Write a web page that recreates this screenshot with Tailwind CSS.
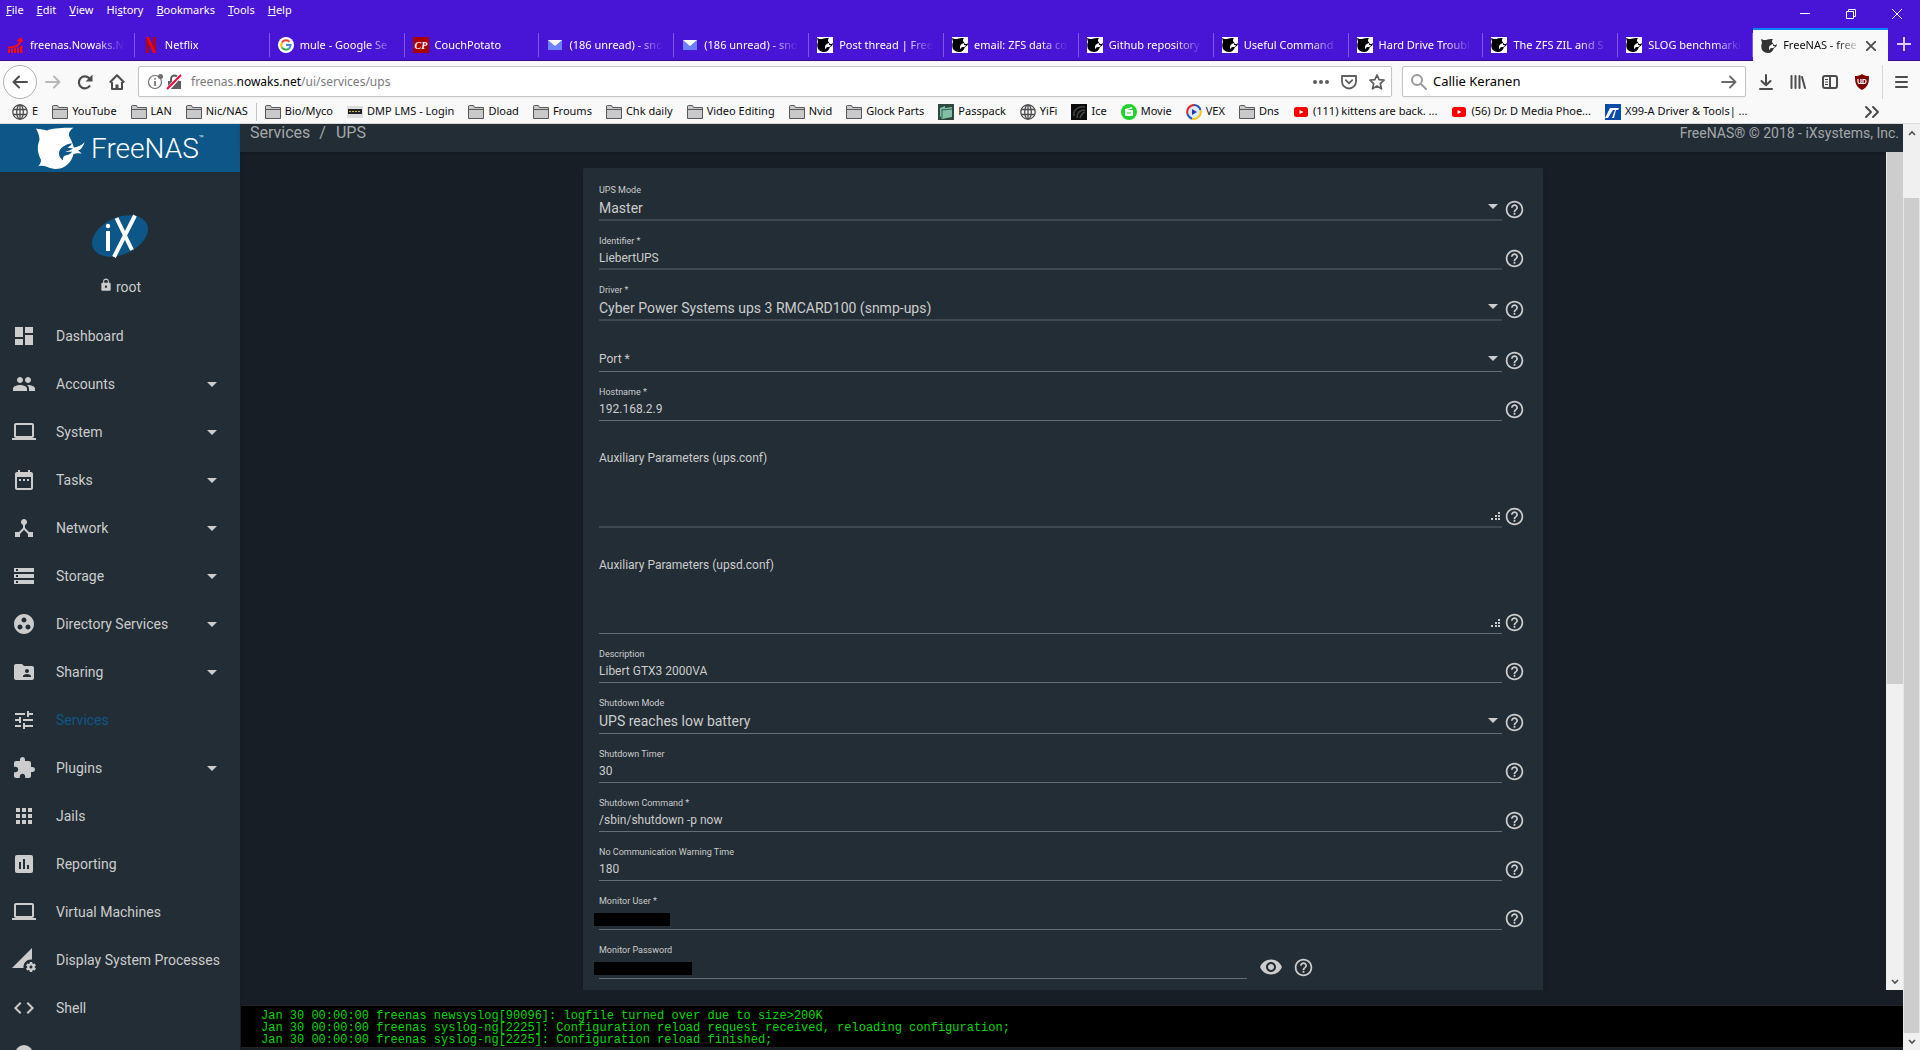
<!DOCTYPE html>
<html lang="en">
<head>
<meta charset="utf-8">
<title>FreeNAS - freenas.nowaks.net</title>
<script src="https://cdn.jsdelivr.net/npm/@tailwindcss/browser@4"></script>
</head>
<body class="h-screen overflow-hidden flex flex-col bg-[#171e25] font-['Noto_Sans',sans-serif] text-[11px]">

<svg class="hidden">
  <symbol id="help" viewBox="0 0 24 24"><path fill="currentColor" d="M11 18h2v-2h-2v2zm1-16C6.48 2 2 6.48 2 12s4.480 10 10 10 10-4.480 10-10S17.520 2 12 2zm0 18c-4.410 0-8-3.590-8-8s3.590-8 8-8 8 3.590 8 8-3.590 8-8 8zm0-14c-2.210 0-4 1.790-4 4h2c0-1.100.9-2 2-2s2 .9 2 2c0 2-3 1.750-3 5h2c0-2.250 3-2.500 3-5 0-2.210-1.790-4-4-4z"/></symbol>
  <symbol id="caret" viewBox="0 0 10 5"><path fill="currentColor" d="M0 0h10L5 5z"/></symbol>
  <symbol id="grip" viewBox="0 0 9 8"><path fill="currentColor" d="M7 0h2v2H7zM4 3h2v2H4zM7 3h2v2H7zM0 6h2v2H0zM4 6h2v2H4zM7 6h2v2H7z"/></symbol>
  <symbol id="eye" viewBox="0 0 24 24"><path fill="currentColor" d="M12 4.500C7 4.500 2.730 7.610 1 12c1.730 4.390 6 7.500 11 7.500s9.270-3.110 11-7.500c-1.730-4.390-6-7.500-11-7.500zM12 17c-2.760 0-5-2.240-5-5s2.240-5 5-5 5 2.240 5 5-2.240 5-5 5zm0-8c-1.660 0-3 1.340-3 3s1.340 3 3 3 3-1.340 3-3-1.340-3-3-3z"/></symbol>
  <symbol id="lock" viewBox="0 0 24 24"><path fill="currentColor" d="M18 8h-1V6c0-2.760-2.240-5-5-5S7 3.240 7 6v2H6c-1.100 0-2 .9-2 2v10c0 1.100.9 2 2 2h12c1.100 0 2-.9 2-2V10c0-1.100-.9-2-2-2zm-6 9c-1.100 0-2-.9-2-2s.9-2 2-2 2 .9 2 2-.9 2-2 2zm3.100-9H8.900V6c0-1.710 1.390-3.100 3.100-3.100s3.100 1.390 3.100 3.100v2z"/></symbol>

  <symbol id="dashboard" viewBox="0 0 24 24"><path fill="currentColor" d="M3 13h8V3H3v10zm0 8h8v-6H3v6zm10 0h8V11h-8v10zm0-18v6h8V3h-8z"/></symbol>
  <symbol id="group" viewBox="0 0 24 24"><path fill="currentColor" d="M16 11c1.660 0 2.990-1.340 2.990-3S17.660 5 16 5s-3 1.340-3 3 1.340 3 3 3zm-8 0c1.660 0 2.990-1.340 2.990-3S9.660 5 8 5 5 6.340 5 8s1.340 3 3 3zm0 2c-2.330 0-7 1.170-7 3.500V19h14v-2.500C15 14.170 10.330 13 8 13zm8 0c-.29 0-.62.02-.97.05 1.160.84 1.970 1.970 1.970 3.450V19h6v-2.500c0-2.330-4.670-3.500-7-3.500z"/></symbol>
  <symbol id="laptop" viewBox="0 0 24 24"><path fill="currentColor" d="M20 18c1.100 0 1.990-.9 1.990-2L22 5c0-1.100-.9-2-2-2H4c-1.100 0-2 .9-2 2v11c0 1.100.9 2 2 2H0v2h24v-2h-4zM4 5h16v11H4V5z"/></symbol>
  <symbol id="date" viewBox="0 0 24 24"><path fill="currentColor" d="M9 11H7v2h2v-2zm4 0h-2v2h2v-2zm4 0h-2v2h2v-2zm2-7h-1V2h-2v2H8V2H6v2H5c-1.110 0-1.990.9-1.990 2L3 20c0 1.100.89 2 2 2h14c1.100 0 2-.9 2-2V6c0-1.100-.9-2-2-2zm0 16H5V9h14v11z"/></symbol>
  <symbol id="hub" viewBox="0 0 24 24"><path fill="currentColor" d="M17 16l-4-4V8.820C14.160 8.400 15 7.300 15 6c0-1.660-1.340-3-3-3S9 4.340 9 6c0 1.300.84 2.400 2 2.820V12l-4 4H3v5h5v-3.050l4-4.200 4 4.200V21h5v-5h-4z"/></symbol>
  <symbol id="storage" viewBox="0 0 24 24"><path fill="currentColor" d="M2 20h20v-4H2v4zm2-3h2v2H4v-2zM2 4v4h20V4H2zm4 3H4V5h2v2zm-4 7h20v-4H2v4zm2-3h2v2H4v-2z"/></symbol>
  <symbol id="work" viewBox="0 0 24 24"><path fill="currentColor" d="M12 2C6.480 2 2 6.480 2 12s4.480 10 10 10 10-4.480 10-10S17.520 2 12 2zM8 17.500c-1.380 0-2.500-1.120-2.500-2.500s1.120-2.500 2.500-2.500 2.500 1.120 2.500 2.500-1.120 2.500-2.500 2.500zM9.500 8c0-1.380 1.120-2.500 2.500-2.500s2.500 1.120 2.500 2.500-1.120 2.500-2.500 2.500S9.500 9.380 9.500 8zm6.500 9.500c-1.380 0-2.500-1.120-2.500-2.500s1.120-2.500 2.500-2.500 2.500 1.120 2.500 2.500-1.120 2.500-2.500 2.500z"/></symbol>
  <symbol id="shared" viewBox="0 0 24 24"><path fill="currentColor" d="M20 6h-8l-2-2H4c-1.100 0-1.990.9-1.990 2L2 18c0 1.100.9 2 2 2h16c1.100 0 2-.9 2-2V8c0-1.100-.9-2-2-2zm-5 3c1.100 0 2 .9 2 2s-.9 2-2 2-2-.9-2-2 .9-2 2-2zm4 8h-8v-1c0-1.330 2.670-2 4-2s4 .67 4 2v1z"/></symbol>
  <symbol id="tune" viewBox="0 0 24 24"><path fill="currentColor" d="M3 17v2h6v-2H3zM3 5v2h10V5H3zm10 16v-2h8v-2h-8v-2h-2v6h2zM7 9v2H3v2h4v2h2V9H7zm14 4v-2H11v2h10zm-6-4h2V7h4V5h-4V3h-2v6z"/></symbol>
  <symbol id="plugin" viewBox="0 0 24 24"><path fill="currentColor" d="M20.500 11H19V7c0-1.100-.9-2-2-2h-4V3.500C13 2.120 11.880 1 10.500 1S8 2.120 8 3.500V5H4c-1.100 0-1.990.9-1.990 2v3.800H3.500c1.490 0 2.700 1.210 2.700 2.700s-1.210 2.700-2.700 2.700H2V20c0 1.100.9 2 2 2h3.800v-1.500c0-1.490 1.210-2.700 2.700-2.700 1.490 0 2.700 1.210 2.700 2.700V22H17c1.100 0 2-.9 2-2v-4h1.500c1.380 0 2.500-1.120 2.500-2.500S21.880 11 20.500 11z"/></symbol>
  <symbol id="apps" viewBox="0 0 24 24"><path fill="currentColor" d="M4 8h4V4H4v4zm6 12h4v-4h-4v4zm-6 0h4v-4H4v4zm0-6h4v-4H4v4zm6 0h4v-4h-4v4zm6-10v4h4V4h-4zm-6 4h4V4h-4v4zm6 6h4v-4h-4v4zm0 6h4v-4h-4v4z"/></symbol>
  <symbol id="chart" viewBox="0 0 24 24"><path fill="currentColor" d="M19 3H5c-1.100 0-2 .9-2 2v14c0 1.100.9 2 2 2h14c1.100 0 2-.9 2-2V5c0-1.100-.9-2-2-2zM9 17H7v-7h2v7zm4 0h-2V7h2v10zm4 0h-2v-4h2v4z"/></symbol>
  <symbol id="process" viewBox="0 0 24 24"><path fill="currentColor" d="M18.990 11.500c.34 0 .67.03 1 .07L20 0 0 20h11.560c-.04-.33-.07-.66-.07-1 0-4.140 3.360-7.500 7.500-7.500zm3.710 7.990c.02-.16.04-.32.04-.49 0-.17-.01-.33-.04-.49l1.060-.83c.09-.08.12-.21.06-.32l-1-1.730c-.06-.11-.19-.15-.31-.11l-1.240.5c-.26-.2-.54-.37-.85-.49l-.19-1.320c-.01-.12-.12-.21-.24-.21h-2c-.12 0-.23.09-.25.21l-.19 1.320c-.3.13-.59.29-.85.49l-1.240-.5c-.11-.04-.24 0-.31.11l-1 1.730c-.06.11-.04.24.06.32l1.060.83c-.02.16-.03.32-.03.49 0 .17.01.33.03.49l-1.060.83c-.09.08-.12.21-.06.32l1 1.730c.06.11.19.15.31.11l1.240-.5c.26.2.54.37.85.49l.19 1.320c.02.12.12.21.25.21h2c.12 0 .23-.09.25-.21l.19-1.320c.3-.13.590-.29.84-.49l1.250.5c.11.04.24 0 .31-.11l1-1.730c.06-.11.03-.24-.06-.32l-1.070-.83zm-3.710 1.010c-.83 0-1.500-.67-1.500-1.500s.67-1.500 1.500-1.500 1.500.67 1.500 1.500-.67 1.500-1.500 1.500z"/></symbol>
  <symbol id="code" viewBox="0 0 24 24"><path fill="currentColor" d="M9.400 16.600L4.800 12l4.600-4.600L8 6l-6 6 6 6 1.400-1.400zm5.200 0l4.600-4.600-4.600-4.600L16 6l6 6-6 6-1.400-1.400z"/></symbol>
  <symbol id="guide" viewBox="0 0 24 24"><circle cx="12" cy="10" r="9" fill="currentColor"/></symbol>

  <symbol id="shark" viewBox="105 295 150 125"><path fill="currentColor" d="M108 299c9 2 20 3 33 6 14-6 43-9 79-8-9 6-14 14-13 23 2 8 8 13 10 23 3 6 4 9 4 13 12-1 22-6 33-16-4 12-10 21-20 26 5 2 8 4 11 9-8-2-17-2-25 1-4 20-19 38-40 43-14 3-27 1-39-5-10-4-18-4-26-2 5-5 8-11 8-19-10-19-13-38-5-58 2-12-5-26-10-36z"/><path fill="#0d5788" d="M215 343c-18 3-33 12-37 24-3 12 2 21 11 27-1-9 2-14 10-15 7-1 14-5 18-11-8 1-15 1-21-1 9-1 17-3 23-9-6 1-12 0-17-3 7-2 12-6 13-12z"/></symbol>
  <symbol id="fav-shark" viewBox="0 0 16 16"><path fill="#fff" d="M0 0h16v16H0z"/><path fill="#000" d="M0 1c2 1 3 1 5 1 2-1 4-1 7-1-1 1-1 2-1 3l2 3c1 0 2 0 3-1 0 2-1 3-3 4-1 3-3 5-6 5-2 0-4-1-5-2l-1-1c-1-3-1-5 0-7z"/><path fill="#fff" d="M12 6c-3 1-4 2-4 4s0 1 1 2c0-2 1-2 3-2 1 0 1-1 2-2h-2z"/></symbol>
  <symbol id="fav-tab" viewBox="0 0 16 16"><path fill="#333" d="M0 1c2 1 3 1 5 1 2-1 4-1 7-1-1 1-1 2-1 3l2 3c1 0 2 0 3-1 0 2-1 3-3 4-1 3-3 5-6 5-2 0-4-1-5-2l-1-1c-1-3-1-5 0-7z"/><path fill="#f9f9fa" d="M12 6c-3 1-4 2-4 4s0 1 1 2c0-2 1-2 3-2 1 0 1-1 2-2h-2z"/></symbol>
  <symbol id="fav-nas" viewBox="0 0 16 16"><path fill="#ff0a0a" d="M0 12h2v4H0zM3 11.500h2V16H3zM6 11h2v5H6zM9 10.500h2V16H9zM12 9h2.500v7H12z"/><path fill="none" stroke="#ff0a0a" stroke-width="2" d="M0 10.500c7 0 12-2 12.500-7"/><path fill="#ff0a0a" d="M8.500 4L13 0l2.500 5z"/></symbol>
  <symbol id="fav-netflix" viewBox="0 0 16 16"><path fill="#b1060f" d="M3 0h3v16H3zM10 0h3v16h-3z"/><path fill="#e50914" d="M3 0h3l7 16h-3z"/></symbol>
  <symbol id="fav-google" viewBox="0 0 16 16"><circle cx="8" cy="8" r="8" fill="#fff"/><g fill="none" stroke-width="2"><path stroke="#ea4335" d="M4 5.500A4.600 4.600 0 0 1 11.300 4.700"/><path stroke="#fbbc05" d="M4 5.500a4.600 4.600 0 0 0 0 5"/><path stroke="#34a853" d="M4 10.500a4.600 4.600 0 0 0 7 .9"/><path stroke="#4285f4" d="M8 8h4.600a4.600 4.600 0 0 1-1.600 3.400"/></g></symbol>
  <symbol id="fav-couch" viewBox="0 0 16 16"><path fill="#a80000" d="M0 0h16v16H0z"/><text x="8" y="12" text-anchor="middle" font-size="10" font-weight="bold" font-style="italic" font-family="Liberation Serif, serif" fill="#fff">CP</text></symbol>
  <symbol id="fav-mail" viewBox="0 0 16 16"><path fill="#6d80ff" d="M1 3h14v10H1z"/><path fill="#fff" d="M1 3h14L8 9z"/></symbol>

  <symbol id="bm-folder" viewBox="0 0 16 16"><path fill="#c9c9cb" stroke="#58585a" d="M.5 14.500v-12.500l1-.5h4l1 2h9v11z"/><path stroke="#58585a" d="M1 5.500h14"/></symbol>
  <symbol id="bm-globe" viewBox="0 0 16 16"><g fill="none" stroke="#4c4c4e" stroke-width="1.300"><circle cx="8" cy="8" r="7.200"/><ellipse cx="8" cy="8" rx="3.300" ry="7.200"/><path d="M1.500 5.500h13M1.500 10.500h13M8 1v14"/></g></symbol>
  <symbol id="bm-dmp" viewBox="0 0 16 16"><path fill="#ddd" d="M0 2h16v12H0z"/><path fill="#222" d="M1 5h14v5H1z"/><path stroke="#c8b84a" stroke-dasharray="2 1" d="M2 7.500h12"/></symbol>
  <symbol id="bm-pass" viewBox="0 0 16 16"><path fill="#2f4740" d="M0 0h16v16H0z"/><path fill="#7fc0a4" d="M2 4l5-2v2l7-1v10l-10 2-2-3z"/><path stroke="#356050" d="M4 5v9M4 6l10-1"/></symbol>
  <symbol id="bm-ice" viewBox="0 0 16 16"><path fill="#0b0b0b" d="M0 0h16v16H0z"/><path fill="none" stroke="#444" stroke-width="1.500" d="M3 12C2 5 8 2 14 3M6 14c0-5 3-8 8-8M9 14c1-3 2-5 5-6"/></symbol>
  <symbol id="bm-movie" viewBox="0 0 16 16"><circle cx="8" cy="8" r="8" fill="#1ed22c"/><path fill="#fff" d="M4 5l7-2 .5 1.500L6 6h6v6H4z"/><path stroke="#1ed22c" d="M6 9h4"/></symbol>
  <symbol id="bm-vex" viewBox="0 0 16 16"><circle cx="8" cy="8" r="6" fill="#dfe9fb"/><g fill="none" stroke-width="2"><path stroke="#d22" d="M1.500 10A7 7 0 0 1 8 1"/><path stroke="#2450c0" d="M8 1a7 7 0 0 1 6.500 5M1.500 10A7 7 0 0 0 6 14.700"/><path stroke="#eac81e" d="M14.500 6A7 7 0 0 1 6 14.700"/></g><path fill="#1b3fa8" d="M6 5l5 3-5 3z"/></symbol>
  <symbol id="bm-yt" viewBox="0 0 16 16"><rect x="1" y="3" width="14" height="10" rx="2.500" fill="#f00"/><path fill="#fff" d="M6.500 6l4 2-4 2z"/></symbol>
  <symbol id="bm-asus" viewBox="0 0 16 16"><path fill="#0a4aa8" d="M0 0h16v16H0z"/><path fill="#fff" d="M5 4h9l-1 2h-2L9 14H7l3-8H8L3 14H0z"/></symbol>
</svg>

<!-- Browser chrome -->
<header class="shrink-0">
  <div class="bg-[#4814d6] text-white">
    <div class="flex justify-between h-7">
      <nav class="flex gap-[13px] px-1.5 h-5 items-center" aria-label="Menu bar">
        <a href="#"><u>F</u>ile</a><a href="#"><u>E</u>dit</a><a href="#"><u>V</u>iew</a><a href="#">Hi<u>s</u>tory</a><a href="#"><u>B</u>ookmarks</a><a href="#"><u>T</u>ools</a><a href="#"><u>H</u>elp</a>
      </nav>
      <div class="flex">
        <button class="w-[46px] h-7 grid place-items-center" aria-label="Minimize"><svg class="size-[10px]" viewBox="0 0 10 10"><path stroke="#fff" d="M0 4.500h10"/></svg></button>
        <button class="w-[46px] h-7 grid place-items-center" aria-label="Restore"><svg class="size-[10px]" viewBox="0 0 10 10" fill="none" stroke="#fff"><path d="M.5 2.500h7v7h-7zM2.500 2V.5h7v7H8"/></svg></button>
        <button class="w-[46px] h-7 grid place-items-center" aria-label="Close"><svg class="size-[10px]" viewBox="0 0 10 10"><path stroke="#fff" d="M0 0l10 10M10 0L0 10"/></svg></button>
      </div>
    </div>
    <div class="flex h-[33px]">
      <div id="tabs" class="grid grid-cols-14 flex-1 min-w-0"></div>
      <button class="w-8 grid place-items-center border-b border-[#2f0d8f]" aria-label="New tab"><svg class="size-[14px]" viewBox="0 0 14 14"><path stroke="#d8ccff" stroke-width="2" d="M7 0v14M0 7h14"/></svg></button>
    </div>
  </div>

  <div class="flex items-center h-[39px] bg-[#f9f9fa] pt-0.5 pl-[3px] pr-[5px] text-[#4c4c4f]">
    <button class="size-[34px] rounded-full border border-[#b1b1b3] bg-white grid place-items-center" aria-label="Back"><svg class="size-4" viewBox="0 0 16 16" fill="none" stroke="currentColor" stroke-width="2" stroke-linecap="round" stroke-linejoin="round"><path d="M15 8H1.500M7 2.500L1.500 8 7 13.500"/></svg></button>
    <button class="w-8 grid place-items-center text-[#b8b8ba]" aria-label="Forward"><svg class="size-4" viewBox="0 0 16 16" fill="none" stroke="currentColor" stroke-width="2" stroke-linecap="round" stroke-linejoin="round"><path d="M1 8h13.500M9 2.500L14.500 8 9 13.500"/></svg></button>
    <button class="w-8 grid place-items-center" aria-label="Reload"><svg class="size-4" viewBox="0 0 16 16"><path fill="none" stroke="currentColor" stroke-width="2.200" d="M13 11.500A6 6 0 1 1 12.500 4.500"/><path fill="currentColor" d="M15.500.5v7h-7z"/></svg></button>
    <button class="w-8 grid place-items-center" aria-label="Home"><svg class="size-4" viewBox="0 0 16 16" fill="none" stroke="currentColor" stroke-width="2" stroke-linejoin="round"><path d="M.8 8.500L8 1.200l7.200 7.300M3 8v7h10V8"/><path d="M8 15v-4.500" stroke-width="3"/></svg></button>
    <div class="flex items-center flex-1 h-[31px] ml-[5px] border border-[#c4c4c6] rounded-xs bg-white pl-2 pr-1.5 shadow-xs">
      <svg class="w-9 h-4 shrink-0" viewBox="0 0 36 16"><circle cx="8" cy="8" r="6.500" fill="none" stroke="#6e6e70" stroke-width="1.200"/><path stroke="#6e6e70" stroke-width="1.600" d="M8 7v5M8 4v1.600"/><circle cx="13.500" cy="2.500" r="2.500" fill="#6e6e70"/><path fill="#5e5e60" d="M21 7h13v8H21z"/><path fill="none" stroke="#5e5e60" stroke-width="2" d="M24 7V5a3.500 3.500 0 0 1 7 0v2"/><path stroke="#fff" stroke-width="4" d="M20 16L34 1"/><path stroke="#ff0039" stroke-width="2" d="M20 15L34 1"/></svg>
      <p class="flex-1 pl-2 text-xs text-[#7a7a7c]">freenas.<span class="text-black">nowaks.net</span>/ui/services/ups</p>
      <div class="flex items-center gap-3 text-[#5e5e60]">
        <svg class="size-4" viewBox="0 0 16 16" fill="currentColor"><circle cx="2" cy="8" r="2"/><circle cx="8" cy="8" r="2"/><circle cx="14" cy="8" r="2"/></svg>
        <svg class="size-4" viewBox="0 0 16 16" fill="none" stroke="currentColor" stroke-width="1.800" stroke-linecap="round" stroke-linejoin="round"><path d="M1 2h14v5.500a7 7 0 0 1-14 0zM4.800 6.200L8 9.300l3.200-3.100"/></svg>
        <svg class="size-4" viewBox="0 0 16 16" fill="none" stroke="currentColor" stroke-width="1.700" stroke-linejoin="round"><path d="M8 1l2.100 4.700 5 .5-3.800 3.400 1.200 5.200L8 12.100l-4.500 2.700 1.200-5.200L.9 6.200l5-.5z"/></svg>
      </div>
    </div>
    <div class="flex items-center w-[344px] h-[31px] ml-2.5 border border-[#c4c4c6] rounded-xs bg-white px-2 shadow-xs">
      <svg class="size-4" viewBox="0 0 16 16" fill="none" stroke="#9a9a9c" stroke-width="2" stroke-linecap="round"><circle cx="6" cy="6" r="5"/><path d="M10 10l5 5"/></svg>
      <input class="flex-1 min-w-0 pl-1.5 text-[13px] text-black outline-none" value="Callie Keranen" aria-label="Search">
      <svg class="size-4" viewBox="0 0 16 16" fill="none" stroke="#6a6a6c" stroke-width="1.800" stroke-linecap="round" stroke-linejoin="round"><path d="M1 8h13.500M9 2.500L14.500 8 9 13.500"/></svg>
    </div>
    <button class="w-8 ml-1 grid place-items-center" aria-label="Downloads"><svg class="size-4" viewBox="0 0 16 16" fill="none" stroke="currentColor" stroke-width="2" stroke-linecap="round" stroke-linejoin="round"><path d="M8 1v10M3.500 7L8 11.300 12.500 7M2 15h12"/></svg></button>
    <button class="w-8 grid place-items-center" aria-label="Library"><svg class="size-4" viewBox="0 0 16 16" fill="none" stroke="currentColor" stroke-width="2" stroke-linecap="round"><path d="M1.500 2v12M5.500 2v12M9.500 2v12M12 3l3 11"/></svg></button>
    <button class="w-8 grid place-items-center" aria-label="Sidebars"><svg class="size-4" viewBox="0 0 16 16" fill="none" stroke="currentColor" stroke-width="2"><rect x="1" y="2" width="14" height="12" rx="2"/><path d="M8 2v12"/><path stroke-width="1" d="M3 5.500h3M3 8h3M3 10.500h3"/></svg></button>
    <button class="w-8 grid place-items-center" aria-label="uBlock"><svg class="size-4" viewBox="0 0 16 16"><path fill="#800000" d="M8 0c2 1.500 4 2 7 2 0 7-1 11-7 14C2 13 1 9 1 2c3 0 5-.5 7-2z"/><path fill="none" stroke="#fff" stroke-width="1.200" d="M4 5v3a1.500 1.500 0 0 0 3 0V5M7 9.500h3.500a1.500 2 0 0 0 0-4H9v4"/></svg></button>
    <div class="h-[34px] w-px bg-[#d7d7db] mx-1"></div>
    <button class="w-7 grid place-items-center" aria-label="Open menu"><svg class="size-4" viewBox="0 0 16 16"><path stroke="currentColor" stroke-width="2" stroke-linecap="round" d="M3 3h11M3 8h11M3 13h11"/></svg></button>
  </div>

  <div class="flex items-center h-6 bg-[#f9f9fa] pl-3 pr-10 border-b border-[#ddd] text-[#0c0c0d]">
    <nav id="bookmarks" class="flex items-center flex-1 gap-3.5 whitespace-nowrap" aria-label="Bookmarks"></nav>
    <svg class="size-4" viewBox="0 0 16 16" fill="none" stroke="#4c4c4f" stroke-width="2" stroke-linecap="round" stroke-linejoin="round"><path d="M2 3l5 5-5 5M9 3l5 5-5 5"/></svg>
  </div>
</header>

<!-- Page viewport -->
<div class="flex flex-1 min-h-0 font-['Roboto',sans-serif] text-[#cccccc]">
  <aside class="w-60 shrink-0 overflow-hidden bg-[#232d35] shadow-md">
    <div class="h-12 bg-[#0d5788] text-white flex items-center pl-[35px] gap-1.5">
      <svg class="w-[50px] h-[42px]"><use href="#shark"/></svg>
      <p class="text-[28px] leading-none font-light flex pt-0.5">FreeNAS<span class="text-[8px]">™</span></p>
    </div>
    <div class="h-[140px] pt-[42px] flex flex-col items-center gap-[19px]">
      <svg class="w-14 h-[44px]" viewBox="0 0 56 44"><ellipse cx="28" cy="22" rx="29.500" ry="18.500" transform="rotate(-24 28 22)" fill="#0d5788"/><path stroke="#fff" stroke-width="4" d="M24.500 4L40 36M43 1.500L22 43"/><path stroke="#fff" stroke-width="4" d="M16 17v20"/><circle cx="16" cy="12" r="2.200" fill="#fff"/></svg>
      <p class="flex items-start gap-[3px] text-sm leading-5"><svg class="size-[14px] mt-px"><use href="#lock"/></svg>root</p>
    </div>
    <nav id="menu" aria-label="Main"></nav>
  </aside>

  <div class="flex-1 min-w-0 flex flex-col">
    <div class="h-7 shrink-0 bg-[#232d35] px-1 pt-px shadow-sm flex justify-between leading-4 text-[#a3a7aa]">
      <p class="flex gap-[9px] pl-1.5 text-base leading-4"><a href="#">Services</a><span>/</span><span class="pl-px">UPS</span></p>
      <p class="text-sm leading-4">FreeNAS® © 2018 - iXsystems, Inc.</p>
    </div>
    <div class="flex flex-1 min-h-0">
      <main class="flex-1 min-w-0 overflow-hidden pt-4">
        <form id="form" class="w-full max-w-[960px] h-full mx-auto rounded-t-xs bg-[#232d35] shadow-md pl-4 pr-[18px] pt-0.5 overflow-hidden"></form>
      </main>
      <div class="w-[17px] shrink-0 bg-[#f0f0f0] flex flex-col justify-between items-center" aria-hidden="true">
        <div class="w-full h-[532px] border-l border-[#e6e6e6] bg-[#cdcdcd]"></div>
        <svg class="w-2 h-4" viewBox="0 0 8 16"><path fill="none" stroke="#505050" stroke-width="1.600" d="M1 6l3 3 3-3"/></svg>
      </div>
    </div>
    <pre class="shrink-0 mt-[15px] ml-px h-[43px] mb-0.5 pl-5 pt-1 border-y border-[#222] bg-black text-[#00d800] text-xs leading-3 font-['Liberation_Mono',monospace]">Jan 30 00:00:00 freenas newsyslog[90096]: logfile turned over due to size&gt;200K
Jan 30 00:00:00 freenas syslog-ng[2225]: Configuration reload request received, reloading configuration;
Jan 30 00:00:00 freenas syslog-ng[2225]: Configuration reload finished;</pre>
  </div>

  <div class="w-[17px] shrink-0 bg-[#f0f0f0] flex flex-col items-center" aria-hidden="true">
    <svg class="w-2 h-[17px]" viewBox="0 0 8 17"><path fill="none" stroke="#505050" stroke-width="1.600" d="M1 11l3-3 3 3"/></svg>
    <div class="w-full flex-1 mt-[57px] bg-[#cdcdcd] border-x border-[#e6e6e6]"></div>
    <svg class="w-2 h-[17px]" viewBox="0 0 8 17"><path fill="none" stroke="#505050" stroke-width="1.600" d="M1 7l3 3 3-3"/></svg>
  </div>
</div>

<script>
  const icon = (id, cls) => `<svg class="${cls}"><use href="#${id}"/></svg>`;

  const tabs = [
    ['fav-nas', 'freenas.Nowaks.N'], ['fav-netflix', 'Netflix'], ['fav-google', 'mule - Google Se'],
    ['fav-couch', 'CouchPotato'], ['fav-mail', '(186 unread) - sno'], ['fav-mail', '(186 unread) - sno'],
    ['fav-shark', 'Post thread | Free'], ['fav-shark', 'email: ZFS data co'], ['fav-shark', 'Github repository'],
    ['fav-shark', 'Useful Command'], ['fav-shark', 'Hard Drive Troubl'], ['fav-shark', 'The ZFS ZIL and S'],
    ['fav-shark', 'SLOG benchmarki'], ['fav-tab', 'FreeNAS - free', true]
  ];
  document.getElementById('tabs').innerHTML = tabs.map(([id, title, active]) => active
    ? `<a href="#" class="flex min-w-0 items-center gap-1.5 pl-2 pr-3 border-t-2 border-[#0a84ff] bg-[#f9f9fa] text-[#0c0c0d]">${icon(id, 'size-4 shrink-0')}<span class="flex-1 overflow-hidden whitespace-nowrap [mask-image:linear-gradient(to_right,black_70%,transparent)]">${title}</span><svg class="size-[10px] shrink-0" viewBox="0 0 10 10"><path stroke="#4c4c4f" stroke-width="1.800" d="M0 0l10 10M10 0L0 10"/></svg></a>`
    : `<a href="#" class="flex min-w-0 items-center pt-0.5 border-b border-[#2f0d8f]"><span class="flex flex-1 min-w-0 items-center gap-1.5 h-6 pl-2 pr-2.5 border-r border-[#7c58e4]">${icon(id, 'size-4 shrink-0')}<span class="flex-1 overflow-hidden whitespace-nowrap [mask-image:linear-gradient(to_right,black_70%,transparent)]">${title}</span></span></a>`
  ).join('');

  const bookmarks = [
    ['globe', 'E'], ['folder', 'YouTube'], ['folder', 'LAN'], ['folder', 'Nic/NAS', true], ['folder', 'Bio/Myco'],
    ['dmp', 'DMP LMS - Login'], ['folder', 'Dload'], ['folder', 'Froums'], ['folder', 'Chk daily'],
    ['folder', 'Video Editing'], ['folder', 'Nvid'], ['folder', 'Glock Parts'], ['pass', 'Passpack'],
    ['globe', 'YiFi'], ['ice', 'Ice'], ['movie', 'Movie'], ['vex', 'VEX'], ['folder', 'Dns'],
    ['yt', '(111) kittens are back. ...'], ['yt', '(56) Dr. D Media Phoe...'], ['asus', 'X99-A Driver & Tools| ...']
  ];
  document.getElementById('bookmarks').innerHTML = bookmarks.map(([id, text, sep]) =>
    `<a href="#" class="flex items-center gap-1">${icon('bm-' + id, 'size-4 shrink-0')}${text}</a>` +
    (sep ? '<span class="w-px h-[18px] bg-[#c4c4c6] -mx-1.5"></span>' : '')
  ).join('');

  const menu = [
    ['dashboard', 'Dashboard'], ['group', 'Accounts', true], ['laptop', 'System', true], ['date', 'Tasks', true],
    ['hub', 'Network', true], ['storage', 'Storage', true], ['work', 'Directory Services', true],
    ['shared', 'Sharing', true], ['tune', 'Services'], ['plugin', 'Plugins', true], ['apps', 'Jails'],
    ['chart', 'Reporting'], ['laptop', 'Virtual Machines'], ['process', 'Display System Processes'],
    ['code', 'Shell'], ['guide', '']
  ];
  document.getElementById('menu').innerHTML = menu.map(([id, text, sub]) =>
    `<a href="#" class="flex items-center h-12 pl-3 pr-[23px] gap-5 text-sm">${icon(id, 'size-6 shrink-0')}<span class="${text === 'Services' ? 'flex-1 whitespace-nowrap text-[#0d5788]' : 'flex-1 whitespace-nowrap'}">${text}</span>${sub ? icon('caret', 'w-[10px] h-[5px]') : ''}</a>`
  ).join('');

  const help = '<button type="button" class="h-full flex items-end pl-0.5 pb-px" aria-label="Help"><svg class="size-[21px]"><use href="#help"/></svg></button>';
  const thick = 'border-b-2 border-[#3f4850]';
  const thin = 'border-b border-[#666e74]';
  const fields = [
    ['select', 'UPS Mode', 'Master', thick],
    ['input', 'Identifier *', 'LiebertUPS', thick],
    ['select', 'Driver *', 'Cyber Power Systems ups 3 RMCARD100 (snmp-ups)', thick],
    ['empty', 'Port *', '', thin],
    ['input', 'Hostname *', '192.168.2.9', thin],
    ['area', 'Auxiliary Parameters (ups.conf)', 'h-[107px]', thick],
    ['area', 'Auxiliary Parameters (upsd.conf)', 'h-[106px]', thin],
    ['input', 'Description', 'Libert GTX3 2000VA', thin],
    ['select', 'Shutdown Mode', 'UPS reaches low battery', thin],
    ['input', 'Shutdown Timer', '30', thin],
    ['input', 'Shutdown Command *', '/sbin/shutdown -p now', thin],
    ['input', 'No Communication Warning Time', '180', thin],
    ['hidden', 'Monitor User *', 'w-[76px] h-[13px]', thin],
    ['password', 'Monitor Password', 'w-[98px] h-[13px]', thin]
  ];
  const small = (i, label) => `<label for="f${i}" class="h-3 text-[9px] leading-3">${label}</label>`;
  const caret = icon('caret', 'absolute right-1 bottom-2.5 w-[10px] h-[5px] pointer-events-none');
  document.getElementById('form').innerHTML = fields.map(([kind, label, value, line], i) => {
    const selectHeight = line === thick ? 'h-[23px]' : 'h-6';
    const inputHeight = line === thick ? 'h-[21px]' : 'h-[22px]';
    if (kind === 'select') return `<div class="flex h-[51px]"><div class="relative flex-1 flex flex-col justify-end ${line}">${small(i, label)}<select id="f${i}" class="appearance-none ${selectHeight} text-sm outline-none"><option>${value}</option></select>${caret}</div>${help}</div>`;
    if (kind === 'empty') return `<div class="flex h-[51px]"><div class="relative flex-1 flex flex-col justify-end ${line}"><select aria-label="Port" class="appearance-none h-6 text-xs outline-none"><option>${label}</option></select>${caret}</div>${help}</div>`;
    if (kind === 'area') return `<div class="flex ${value}"><div class="relative flex-1 flex flex-col pt-[30px] ${line}"><label for="f${i}" class="text-xs leading-[14px]">${label}</label><textarea id="f${i}" class="flex-1 resize-none text-xs outline-none"></textarea>${icon('grip', 'absolute right-0.5 bottom-1.5 w-[9px] h-2')}</div>${help}</div>`;
    if (kind === 'hidden') return `<div class="flex h-[49px]"><div class="relative flex-1 flex flex-col justify-end ${line}">${small(i, label)}<input id="f${i}" class="h-[22px] outline-none"><span class="absolute -left-[5px] bottom-[3px] bg-black ${value}"></span></div>${help}</div>`;
    if (kind === 'password') return `<div class="flex h-[49px]"><div class="relative w-[70%] flex flex-col justify-end ${line}">${small(i, label)}<input id="f${i}" type="password" class="h-[22px] outline-none"><span class="absolute -left-[5px] bottom-[3px] bg-black ${value}"></span></div><button type="button" class="pl-3 flex items-end" aria-label="Show password"><svg class="size-6"><use href="#eye"/></svg></button><div class="pl-2">${help}</div></div>`;
    return `<div class="flex h-[49px]"><div class="flex-1 flex flex-col justify-end ${line}">${small(i, label)}<input id="f${i}" value="${value}" class="${inputHeight} text-xs outline-none"></div>${help}</div>`;
  }).join('');
</script>
</body>
</html>
